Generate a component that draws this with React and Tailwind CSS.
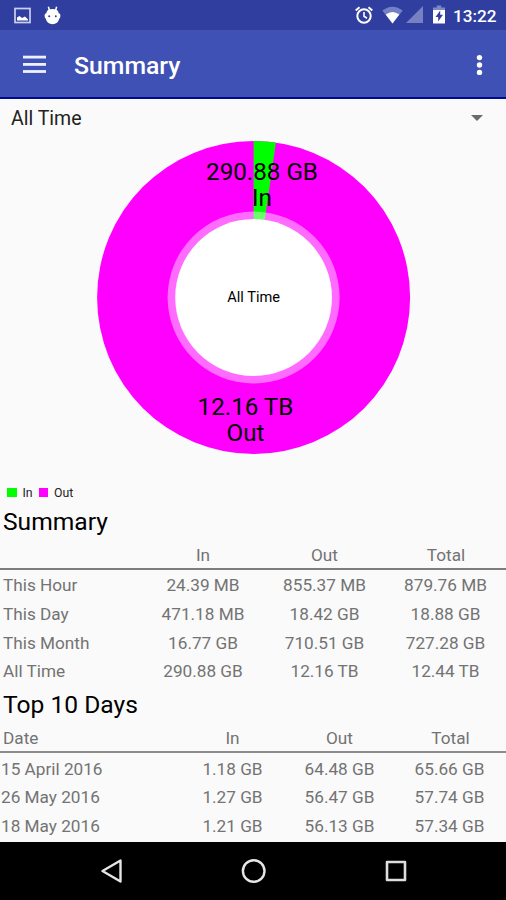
const TOTAL_ROWS = [
  ['This Hour', '24.39 MB', '855.37 MB', '879.76 MB'],
  ['This Day', '471.18 MB', '18.42 GB', '18.88 GB'],
  ['This Month', '16.77 GB', '710.51 GB', '727.28 GB'],
  ['All Time', '290.88 GB', '12.16 TB', '12.44 TB'],
];

const TOP_DAYS = [
  ['15 April 2016', '1.18 GB', '64.48 GB', '65.66 GB'],
  ['26 May 2016', '1.27 GB', '56.47 GB', '57.74 GB'],
  ['18 May 2016', '1.21 GB', '56.13 GB', '57.34 GB'],
];

const StatusBar = () => (
  <div className="flex h-[30px] shrink-0 items-center bg-[#303f9f] text-white">
    <svg className="ml-[14px]" width="17" height="17" viewBox="0 0 17 17" fill="none">
      <rect x="1" y="1.5" width="15" height="14" stroke="#c9d0f0" strokeWidth="1.7" />
      <path d="M3 13.5V10.5L5.5 9L8 11L11 9.5L14 12.5V13.5Z" fill="#fff" />
    </svg>
    {/* android debug head */}
    <svg className="ml-[13px]" width="17" height="19" viewBox="0 0 17 19">
      <path d="M4.4 0.8L5.6 5M12.6 0.8L11.4 5" stroke="#fff" strokeWidth="1.5" />
      <path d="M4 4Q8.5 2 13 4Q14.5 5 14.8 7.5H15.5Q16.4 8 16.4 9.5Q16.4 12 15.3 12.5Q14 18.2 8.5 18.2Q3 18.2 1.7 12.5Q0.6 12 0.6 9.5Q0.6 8 1.5 7.5H2.2Q2.5 5 4 4Z" fill="#fff" />
      <circle cx="5.2" cy="10.2" r="1" fill="#303f9f" />
      <circle cx="11.8" cy="10.2" r="1" fill="#303f9f" />
    </svg>
    <div className="ml-auto flex items-center">
      <svg width="20" height="20" viewBox="0 0 20 20" fill="none" stroke="#fff">
        <circle cx="10" cy="11" r="6.7" strokeWidth="2" />
        <path d="M10 7V11.3L13 13.2" strokeWidth="1.6" />
        <path d="M1.7 5.4L5.5 2.2M18.3 5.4L14.5 2.2" strokeWidth="1.9" />
      </svg>
      <svg className="ml-[8px]" width="21" height="18" viewBox="0 0 21 18">
        <path d="M0.3 4.6Q10.5 -3 20.7 4.6L10.5 17.5Z" fill="#7480c4" />
        <path d="M3.7 8.6Q10.5 3.4 17.3 8.6L10.5 17.5Z" fill="#fff" />
      </svg>
      <svg className="ml-[3px]" width="17" height="17" viewBox="0 0 17 17">
        <path d="M17 0V17H0Z" fill="#7680c2" />
      </svg>
      <svg className="ml-[10px]" width="12" height="19" viewBox="0 0 12 19">
        <path d="M3.8 0.5H8.2V2.5H12V6H0V2.5H3.8Z" fill="#7d88c6" />
        <path d="M0 5H12V18.5H0Z" fill="#fff" />
        <path d="M7.2 5.6L2.5 12H5.2V16.5L10 9.7H7.2Z" fill="#303f9f" />
      </svg>
      <span className="ml-[8px] mr-[9px] mt-[3px] w-[44px] text-[17.2px] leading-none font-medium">13:22</span>
    </div>
  </div>
);

const Toolbar = () => (
  <div className="flex h-[69px] shrink-0 items-center border-b-2 border-[#000b94] bg-[#3f51b5] pb-[2px] text-white">
    <svg className="ml-[23px] mt-[3px]" width="23" height="19" viewBox="0 0 23 19" fill="#eef0ff">
      <rect y="0.7" width="23" height="2.8" />
      <rect y="8" width="23" height="2.8" />
      <rect y="15.1" width="23" height="2.8" />
    </svg>
    <h1 className="ml-[28px] mt-[7px] text-[24.8px] font-medium">Summary</h1>
    <svg className="ml-auto mr-[23px] mt-[4px]" width="7" height="22" viewBox="0 0 7 22" fill="#fff">
      <circle cx="3.5" cy="3.6" r="2.7" />
      <circle cx="3.5" cy="11" r="2.7" />
      <circle cx="3.5" cy="18.4" r="2.7" />
    </svg>
  </div>
);

const PieChart = () => (
  <svg className="block h-[346px] w-full shrink-0" viewBox="0 137 506 346">
    <circle cx="253.6" cy="297.5" r="156.5" fill="#ff00ff" />
    <path d="M253.6 297.5V141A156.5 156.5 0 0 1 275.9 142.6Z" fill="#00ff00" />
    <circle cx="253.6" cy="297.5" r="86" fill="#fff" fillOpacity="0.42" />
    <circle cx="253.6" cy="297.5" r="78.4" fill="#fff" />
    <g textAnchor="middle" fill="#000">
      <text x="262" y="179.6" fontSize="24.2">290.88 GB</text>
      <text x="262" y="206" fontSize="24.2">In</text>
      <text x="245.5" y="414.6" fontSize="24.2">12.16 TB</text>
      <text x="245.5" y="440.6" fontSize="24.2">Out</text>
      <text x="253.6" y="302" fontSize="14.6">All Time</text>
    </g>
  </svg>
);

const Legend = () => (
  <div className="flex h-[20px] shrink-0 items-center pl-[7px] text-[12.3px] text-[#222]">
    <span className="mb-px h-[9.5px] w-[9.5px] bg-[#00ff00]" />
    <span className="ml-[6px] w-[10px]">In</span>
    <span className="mb-px ml-[6px] h-[9.5px] w-[9.5px] bg-[#ff00ff]" />
    <span className="ml-[6px]">Out</span>
  </div>
);

export default function App() {
  return (
    <div
      className="flex h-[900px] w-[506px] flex-col overflow-hidden bg-[#fafafa] text-black"
      style={{ fontFamily: 'Roboto, "Noto Sans", sans-serif' }}
    >
      <StatusBar />
      <Toolbar />

      <div className="flex h-[38px] shrink-0 items-center justify-between pl-[11px] pr-[23px] text-[19.5px] text-[#222]">
        <span className="pt-[2px]">All Time</span>
        <span className="h-0 w-0 border-x-[6px] border-t-[6px] border-x-transparent border-t-[#6b6b6b]" />
      </div>

      <PieChart />
      <Legend />

      <h2 className="h-[37px] shrink-0 pl-[3px] text-[24.6px] leading-[37px]">Summary</h2>
      <div className="shrink-0 text-[17.2px] text-[#737373]">
        <div className="grid h-[30px] grid-cols-[142px_122px_121px_121px] items-center border-b-2 border-[#7d7d7d] pt-[2px] text-center leading-[26px]">
          <span />
          <span>In</span>
          <span>Out</span>
          <span className="pl-px">Total</span>
        </div>
        <div className="pt-[2px]">
          {TOTAL_ROWS.map(([label, ...values]) => (
            <div key={label} className="grid h-[28.6px] grid-cols-[142px_122px_121px_121px] items-center text-center">
              <span className="pl-[3px] text-left">{label}</span>
              {values.map((v, i) => (
                <span key={i}>{v}</span>
              ))}
            </div>
          ))}
        </div>
      </div>

      <h2 className="h-[37px] shrink-0 pl-[3px] text-[24.6px] leading-[37px]">Top 10 Days</h2>
      <div className="min-h-0 flex-1 overflow-hidden text-[17.2px] text-[#737373]">
        <div className="grid h-[30px] grid-cols-[179px_107px_107px_113px] items-center border-b-2 border-[#8c8c8c] pt-[3px] text-center leading-[25px]">
          <span className="pl-[3px] text-left">Date</span>
          <span>In</span>
          <span>Out</span>
          <span className="pl-[2px]">Total</span>
        </div>
        <div className="pt-[2px]">
          {TOP_DAYS.map(([label, ...values]) => (
            <div key={label} className="grid h-[28.6px] grid-cols-[179px_107px_107px_113px] items-center text-center">
              <span className="pl-px text-left">{label}</span>
              {values.map((v, i) => (
                <span key={i}>{v}</span>
              ))}
            </div>
          ))}
        </div>
      </div>

      <nav className="flex h-[58px] shrink-0 items-center bg-black">
        <svg className="ml-[100px]" width="24" height="26" viewBox="0 0 24 26" fill="none" stroke="#e6e6e6" strokeWidth="2.4" strokeLinejoin="round">
          <path d="M2.5 13L20.5 2.5V23.5Z" />
        </svg>
        <svg className="ml-[117px]" width="26" height="26" viewBox="0 0 26 26" fill="none" stroke="#e6e6e6" strokeWidth="2.4">
          <circle cx="12.7" cy="13" r="10.8" />
        </svg>
        <svg className="ml-[118px]" width="22" height="22" viewBox="0 0 22 22" fill="none" stroke="#dedede" strokeWidth="2.6" strokeLinejoin="round">
          <rect x="2" y="2" width="18" height="18" />
        </svg>
      </nav>
    </div>
  );
}
